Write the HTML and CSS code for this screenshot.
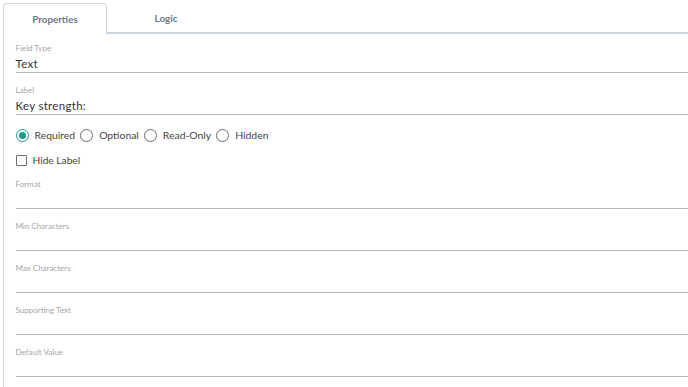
FILE: index.html
```html
<!DOCTYPE html>
<html>
<head>
<meta charset="utf-8">
<link rel="stylesheet" href="styles.css">
</head>
<body>
<div class="panel">
  <div class="tabs">
    <div class="tab active">Properties</div>
    <div class="tab">Logic</div>
    <div class="tab-fill"></div>
  </div>
  <div class="body">
    <div class="field">
      <div class="f-label">Field Type</div>
      <div class="f-value">Text</div>
    </div>
    <div class="field">
      <div class="f-label">Label</div>
      <div class="f-value">Key strength:</div>
    </div>
    <div class="radios">
      <label class="radio"><span class="circle checked"></span>Required</label>
      <label class="radio"><span class="circle"></span>Optional</label>
      <label class="radio"><span class="circle"></span>Read-Only</label>
      <label class="radio"><span class="circle"></span>Hidden</label>
    </div>
    <label class="check"><span class="box"></span>Hide Label</label>
    <div class="field first-empty">
      <div class="f-label">Format</div>
      <div class="f-value"></div>
    </div>
    <div class="field">
      <div class="f-label">Min Characters</div>
      <div class="f-value"></div>
    </div>
    <div class="field">
      <div class="f-label">Max Characters</div>
      <div class="f-value"></div>
    </div>
    <div class="field">
      <div class="f-label">Supporting Text</div>
      <div class="f-value"></div>
    </div>
    <div class="field">
      <div class="f-label">Default Value</div>
      <div class="f-value"></div>
    </div>
  </div>
</div>
</body>
</html>
```

FILE: styles.css
```css
html, body {
  margin: 0;
  padding: 0;
  background: #ffffff;
  font-family: Lato, "Liberation Sans", sans-serif;
  color: #3a3f44;
  overflow: hidden;
}

.panel {
  width: 688px;
  height: 387px;
  padding-left: 3px;
  box-sizing: border-box;
}

.tabs {
  display: flex;
  height: 34px;
  padding-top: 3px;
  box-sizing: border-box;
}

.tab {
  display: flex;
  align-items: center;
  justify-content: center;
  font-size: 9.8px;
  font-weight: 700;
  color: #6b7886;
  box-sizing: border-box;
}

.tab.active {
  width: 104px;
  border: 1.5px solid #cdd5dd;
  border-bottom: none;
  border-radius: 4px 4px 0 0;
  background: #fff;
  padding-bottom: 1px;
}

.tab:not(.active) {
  width: 118px;
  border-bottom: 2px solid #cdd5dd;
  padding-top: 1px;
}

.tab-fill {
  flex: 1;
  border-bottom: 2px solid #cdd5dd;
}

.body {
  border-left: 1.5px solid #cdd5dd;
  height: 353px;
  padding-left: 11.5px;
  box-sizing: border-box;
  padding-top: 8px;
}

.field {
  border-bottom: 1px solid #b6b6b6;
  margin-bottom: 11px;
}

.f-label {
  font-size: 8px;
  line-height: 12px;
  color: #a6a6a6;
}

.f-value {
  font-size: 11.5px;
  letter-spacing: 0.3px;
  line-height: 19px;
  height: 18px;
  color: #333;
}

.radios {
  display: flex;
  align-items: center;
  height: 18px;
  margin-top: 2px;
}

.radio {
  display: flex;
  align-items: center;
  font-size: 10.4px;
  color: #444;
  margin-right: 5px;
}

.circle {
  width: 11px;
  height: 11px;
  border: 1px solid #6b6b6b;
  border-radius: 50%;
  margin-right: 6px;
  display: inline-flex;
  align-items: center;
  justify-content: center;
  box-sizing: content-box;
}

.circle.checked {
  border-color: #1c9b86;
}

.circle.checked::after {
  content: "";
  width: 7px;
  height: 7px;
  border-radius: 50%;
  background: #1c9b86;
}

.check {
  display: flex;
  align-items: center;
  font-size: 10.2px;
  color: #444;
  height: 18px;
  margin-top: 7px;
}

.box {
  width: 9px;
  height: 9px;
  border: 1px solid #6b6b6b;
  border-radius: 1px;
  margin-right: 6px;
}

.first-empty {
  margin-top: 9px;
}
```
